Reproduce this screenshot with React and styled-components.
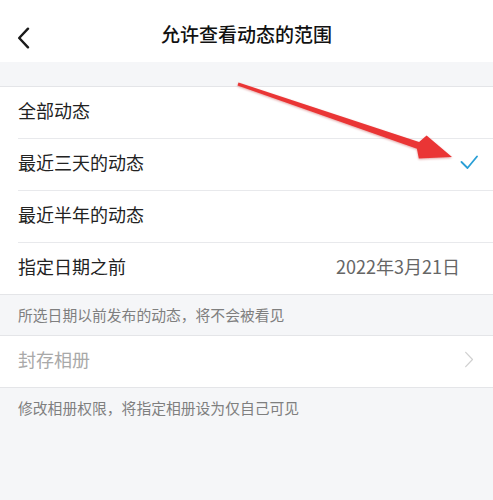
import styled, { createGlobalStyle } from 'styled-components';

const GlobalStyle = createGlobalStyle`
   html, body {
      margin: 0;
      padding: 0;
      background: #f5f6f8;
   }
   body {
      font-family: "Noto Sans CJK SC", "Noto Sans", sans-serif;
   }
`;
const Page = styled.div`
   background: #f5f6f8;
   height: 500px;
   overflow: hidden;
   position: relative;
   width: 493px;
`;
const Header = styled.header`
   align-items: center;
   background: #ffffff;
   display: flex;
   height: 62px;
   justify-content: center;
   position: relative;
`;
const BackButton = styled.div`
   align-items: center;
   display: flex;
   height: 24px;
   left: 17px;
   position: absolute;
   top: 26px;
   width: 20px;
`;
const Title = styled.h1`
   color: #111111;
   font-size: 19px;
   font-weight: 500;
   line-height: 1;
   margin: 4px 0 0;
`;
const Spacer = styled.div`
   height: 24px;
`;
const Group = styled.section`
   background: #ffffff;
   border-bottom: 1px solid #e4e5e8;
   border-top: 1px solid #e4e5e8;
`;
const Row = styled.div`
   align-items: center;
   box-sizing: border-box;
   display: flex;
   height: 51px;
   justify-content: space-between;
   margin-left: 18px;
   padding: 0 15px 5px 0;
   & + & {
      border-top: 1px solid #e8e9ec;
      height: 52px;
   }
`;
const Label = styled.span`
   color: ${p => (p.$muted ? '#a9a9a9' : '#222222')};
   font-size: 18px;
`;
const Value = styled.span`
   color: #666666;
   font-size: 18px;
   margin-right: 18px;
`;
const Note = styled.p`
   color: #7f7f7f;
   font-size: 14.8px;
   line-height: 21px;
   margin: 0;
   padding: 9px 18px 10px;
`;
const Overlay = styled.svg`
   left: 0;
   pointer-events: none;
   position: absolute;
   top: 0;
`;
const Forward = styled.span`
   display: flex;
   margin-right: 4px;
   transform: scaleX(-1);
`;

const Check = () => (
   <svg width='18' height='16' viewBox='0 0 18 16'>
      <polyline
         points='1.5,8 7.5,14 17,2.5'
         fill='none'
         stroke='#2a9fd6'
         strokeWidth='1.8'
         strokeLinecap='round'
         strokeLinejoin='round'
      />
   </svg>
);

const Chevron = ({ color = '#222', size = 20, width = 2 }) => (
   <svg width={size * 0.6} height={size} viewBox='0 0 12 20'>
      <polyline
         points='10,1.5 2,10 10,18.5'
         fill='none'
         stroke={color}
         strokeWidth={width}
         strokeLinecap='round'
         strokeLinejoin='round'
      />
   </svg>
);

const options = ['全部动态', '最近三天的动态', '最近半年的动态'];

const App = () => (
   <Page>
      <GlobalStyle />
      <Header>
         <BackButton>
            <Chevron size={22} width={2.2} color='#1a1a1a' />
         </BackButton>
         <Title>允许查看动态的范围</Title>
      </Header>
      <Spacer />
      <Group>
         {options.map((o, i) => (
            <Row key={o}>
               <Label>{o}</Label>
               {i === 1 && <Check />}
            </Row>
         ))}
         <Row>
            <Label>指定日期之前</Label>
            <Value>2022年3月21日</Value>
         </Row>
      </Group>
      <Note>所选日期以前发布的动态，将不会被看见</Note>
      <Group>
         <Row>
            <Label $muted>封存相册</Label>
            <Forward>
               <Chevron size={17} width={1.4} color='#d0d0d0' />
            </Forward>
         </Row>
      </Group>
      <Note>修改相册权限，将指定相册设为仅自己可见</Note>
      <Overlay width='493' height='500' viewBox='0 0 493 500'>
         <defs>
            <filter id='sh' x='-10%' y='-10%' width='120%' height='130%'>
               <feDropShadow dx='0' dy='1' stdDeviation='1' floodColor='#a00' floodOpacity='0.35' />
            </filter>
         </defs>
         <polygon
            filter='url(#sh)'
            fill='#ea3636'
            points='238.5,82.6 419.1,142.1 426.6,135.6 452,157 418.8,158.4 416.9,148.7 237.5,85.4'
         />
      </Overlay>
   </Page>
);

export default App;
